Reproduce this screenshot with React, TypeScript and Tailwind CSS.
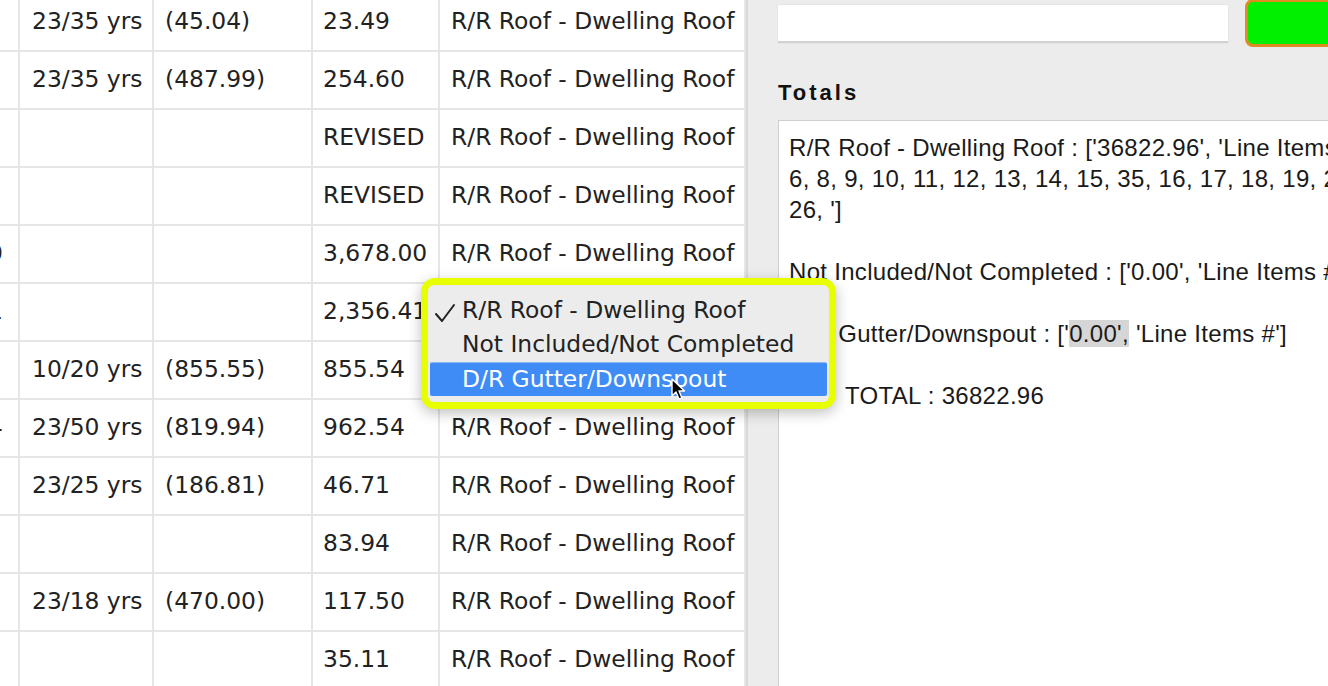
import React from "react";

type Row = { c0?: string; life: string; dep: string; acv: string; cat: string };

const rows: Row[] = [
  { life: "23/35 yrs", dep: "(45.04)", acv: "23.49", cat: "R/R Roof - Dwelling Roof" },
  { life: "23/35 yrs", dep: "(487.99)", acv: "254.60", cat: "R/R Roof - Dwelling Roof" },
  { life: "", dep: "", acv: "REVISED", cat: "R/R Roof - Dwelling Roof" },
  { life: "", dep: "", acv: "REVISED", cat: "R/R Roof - Dwelling Roof" },
  { c0: "3,678.00", life: "", dep: "", acv: "3,678.00", cat: "R/R Roof - Dwelling Roof" },
  { c0: "2,356.41", life: "", dep: "", acv: "2,356.41", cat: "R/R Roof - Dwelling Roof" },
  { life: "10/20 yrs", dep: "(855.55)", acv: "855.54", cat: "R/R Roof - Dwelling Roof" },
  { c0: "1,782.4", life: "23/50 yrs", dep: "(819.94)", acv: "962.54", cat: "R/R Roof - Dwelling Roof" },
  { life: "23/25 yrs", dep: "(186.81)", acv: "46.71", cat: "R/R Roof - Dwelling Roof" },
  { life: "", dep: "", acv: "83.94", cat: "R/R Roof - Dwelling Roof" },
  { life: "23/18 yrs", dep: "(470.00)", acv: "117.50", cat: "R/R Roof - Dwelling Roof" },
  { life: "", dep: "", acv: "35.11", cat: "R/R Roof - Dwelling Roof" },
];

const cell = "h-full flex items-center border-r-2 border-[#e6e6e6] overflow-hidden whitespace-nowrap";

export default function App() {
  return (
    <div className="relative w-[1328px] h-[686px] overflow-hidden flex bg-[#ececec]">
      {/* Table */}
      <div
        className="w-[748px] h-full overflow-hidden bg-white border-r-2 border-[#d9d9d9] text-[#222] text-[23.4px]"
        style={{ fontFamily: '"DejaVu Sans", sans-serif' }}
      >
        <div className="-mt-[6px] flex flex-col">
          {rows.map((r, i) => (
            <div
              key={i}
              className="h-[58px] grid grid-cols-[20px_134px_159px_127px_306px] border-b-2 border-[#e6e6e6]"
            >
              <div className={`${cell} justify-end pr-[15px]`}>{r.c0 ?? ""}</div>
              <div className={`${cell} pl-[12px]`}>{r.life}</div>
              <div className={`${cell} pl-[11px]`}>{r.dep}</div>
              <div className={`${cell} pl-[10px]`}>{r.acv}</div>
              <div className={`${cell} pl-[11px] border-r-0`}>{r.cat}</div>
            </div>
          ))}
        </div>
      </div>

      {/* Right panel */}
      <div className="flex-1 flex flex-col pl-[30px] pt-[5px] min-w-0">
        <div className="flex items-start gap-[17px] h-[38px]">
          <div className="w-[450px] h-[38px] shrink-0 bg-white border-b-2 border-[#d2d2d2] shadow-[0_0_1px_rgba(0,0,0,0.15)]" />
          <div className="w-[120px] h-[48px] -mt-[6px] shrink-0 rounded-[8px] border-[3px] border-[#e28b22] bg-[#00f000]" />
        </div>
        <div
          className="mt-[35px] h-[28px] flex items-center font-bold text-[22px] tracking-[3px] text-[#111]"
          style={{ fontFamily: '"Liberation Sans", Arial, sans-serif' }}
        >
          Totals
        </div>
        <div
          className="mt-[14px] flex-1 bg-white border-l border-t border-[#cfcfcf] pl-[10px] pt-[11px] text-[24px] tracking-[0.3px] leading-[31px] text-[#1a1a1a] whitespace-nowrap overflow-hidden"
          style={{ fontFamily: '"Liberation Sans", Arial, sans-serif' }}
        >
          <div>R/R Roof - Dwelling Roof : ['36822.96', 'Line Items #1, 2, 3, 4, 5,</div>
          <div>6, 8, 9, 10, 11, 12, 13, 14, 15, 35, 16, 17, 18, 19, 20, 21, 22, 23, 24, 25,</div>
          <div>26, ']</div>
          <div>&nbsp;</div>
          <div>Not Included/Not Completed : ['0.00', 'Line Items #']</div>
          <div>&nbsp;</div>
          <div>
            D/R Gutter/Downspout : ['<span className="bg-[#d6d6d6]">0.00',</span> 'Line Items #']
          </div>
          <div>&nbsp;</div>
          <div className="pl-[56px]">TOTAL : 36822.96</div>
        </div>
      </div>

      {/* Dropdown overlay with yellow highlight */}
      <div className="absolute left-[421px] top-[278px] w-[415px] h-[131px] rounded-[14px] border-[7px] border-[#e8ff00] shadow-[0_4px_14px_rgba(0,0,0,0.25)] bg-[#e8ff00]">
        <div
          className="w-full h-full rounded-[6px] bg-[#ececec] flex flex-col pt-[9px] text-[23.4px] text-[#222]"
          style={{ fontFamily: '"DejaVu Sans", sans-serif' }}
        >
          <div className="h-[34px] flex items-center pl-[34px] relative">
            <svg
              className="absolute left-[6px] top-[8px]"
              width="22"
              height="22"
              viewBox="0 0 22 22"
              fill="none"
              stroke="#222"
              strokeWidth="2"
              strokeLinecap="round"
              strokeLinejoin="round"
            >
              <polyline points="2,12 8,19 20,3" />
            </svg>
            R/R Roof - Dwelling Roof
          </div>
          <div className="h-[34px] flex items-center pl-[34px]">Not Included/Not Completed</div>
          <div className="h-[34px] mx-[2px] flex items-center pl-[32px] bg-[#3f8cf6] text-white border-t border-[#8db8f8] rounded-[2px]">
            D/R Gutter/Downspout
          </div>
        </div>
      </div>

      {/* Mouse cursor */}
      <svg
        className="absolute left-[671px] top-[378px]"
        width="16"
        height="24"
        viewBox="0 0 16 24"
      >
        <path
          d="M1 1 L1 18 L5 14 L8 21 L11 20 L8 13 L13.5 13 Z"
          fill="#000"
          stroke="#fff"
          strokeWidth="1.4"
          strokeLinejoin="round"
        />
      </svg>
    </div>
  );
}
